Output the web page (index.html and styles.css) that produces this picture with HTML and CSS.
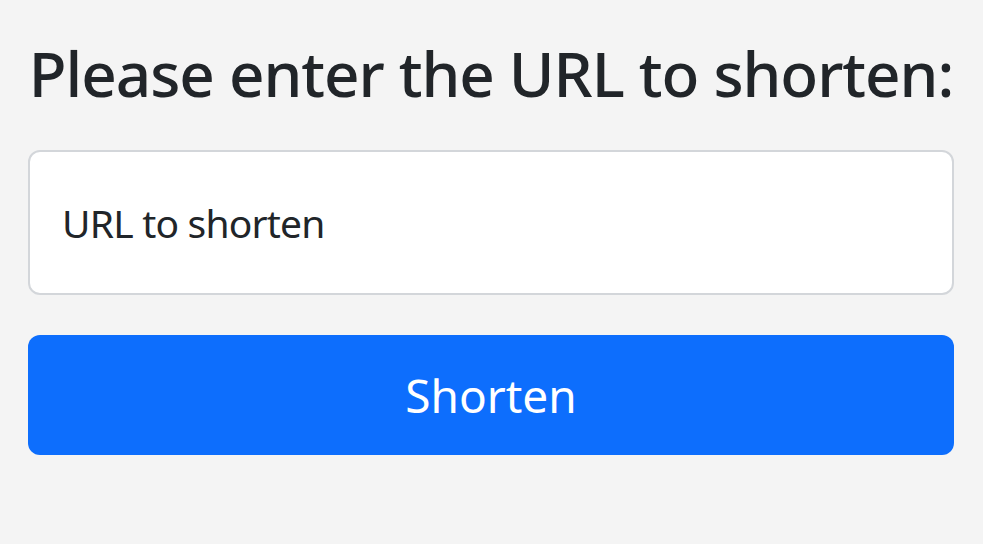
FILE: index.html
```html
<!DOCTYPE html>
<html lang="en">
<head>
<meta charset="utf-8">
<title>URL Shortener</title>
<link rel="stylesheet" href="styles.css">
</head>
<body>
<main class="page">
  <h2 class="title">Please enter the URL to shorten:</h2>
  <form class="form">
    <input class="url-input" type="text" placeholder="URL to shorten">
    <button class="btn-shorten" type="button">Shorten</button>
  </form>
</main>
</body>
</html>
```

FILE: styles.css
```css
html, body {
  margin: 0;
  padding: 0;
  background: #f4f4f4;
}
body {
  font-family: "Noto Sans", "Open Sans", sans-serif;
  color: #212529;
}
.page {
  padding: 0 29px 0 28px;
}
.title {
  margin: 0;
  padding-top: 36px;
  height: 150px;
  box-sizing: border-box;
  font-size: 62px;
  font-weight: 500;
  line-height: 74px;
  letter-spacing: -1.05px;
  text-align: center;
  color: #212529;
  white-space: nowrap;
}
.form {
  display: flex;
  flex-direction: column;
  gap: 40px;
}
.url-input {
  box-sizing: border-box;
  height: 145px;
  width: 100%;
  border: 2px solid #d3d6da;
  border-radius: 12px;
  background: #fff;
  padding: 0 32px;
  font-family: inherit;
  font-size: 39px;
  letter-spacing: -0.8px;
  color: #212529;
  outline: none;
}
.url-input::placeholder {
  color: #212529;
  opacity: 1;
}
.btn-shorten {
  box-sizing: border-box;
  height: 120px;
  width: 100%;
  border: none;
  border-radius: 12px;
  background: #0d6efd;
  color: #fff;
  font-family: inherit;
  font-size: 46px;
  font-weight: 400;
  cursor: pointer;
}
```
